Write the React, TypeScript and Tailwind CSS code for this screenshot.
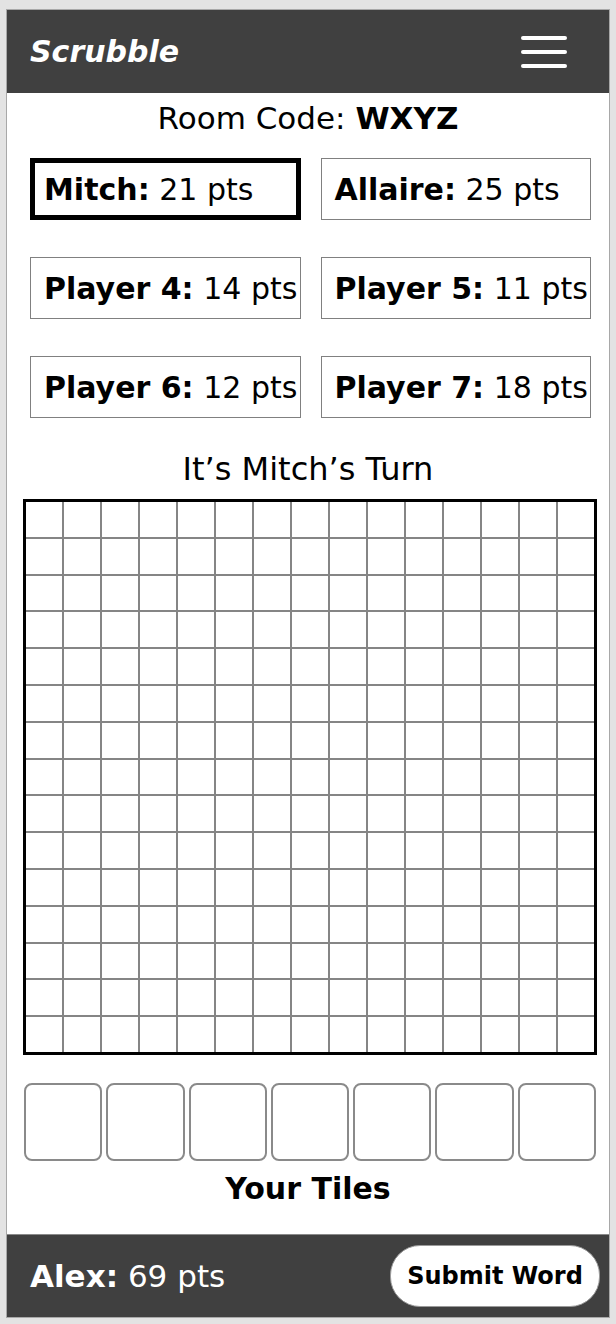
import React from 'react'

const players = [
  { name: 'Mitch', pts: 21, active: true },
  { name: 'Allaire', pts: 25 },
  { name: 'Player 4', pts: 14 },
  { name: 'Player 5', pts: 11 },
  { name: 'Player 6', pts: 12 },
  { name: 'Player 7', pts: 18 },
]

const font = { fontFamily: '"DejaVu Sans", "Noto Sans", sans-serif' }

function App() {
  const cells = Array.from({ length: 15 * 15 })
  const tiles = Array.from({ length: 7 })

  return (
    <div className="min-h-screen bg-[#e3e3e3] px-[6px] pt-[9px] pb-[6px] text-black" style={font}>
      <div className="flex h-[1309px] flex-col border border-[#a8a8a8] bg-white">
        {/* Header */}
        <header className="flex h-[83px] shrink-0 items-center justify-between bg-[#404040] pl-[23px] pr-[42px]">
          <span className="text-[30px] font-bold italic text-white">Scrubble</span>
          <div className="flex w-[46px] flex-col gap-[10px]">
            <span className="h-[4px] rounded-full bg-white" />
            <span className="h-[4px] rounded-full bg-white" />
            <span className="h-[4px] rounded-full bg-white" />
          </div>
        </header>

        {/* Main */}
        <main className="flex flex-1 flex-col">
          <p className="mt-[7px] h-[36px] text-center text-[31px] leading-[36px] whitespace-nowrap">
            Room Code: <b>WXYZ</b>
          </p>

          <div className="mt-[22px] ml-[23px] grid w-[561px] grid-cols-2 gap-x-[20px] gap-y-[37px]">
            {players.map((p) => (
              <div
                key={p.name}
                className={
                  p.active
                    ? 'flex h-[62px] items-center overflow-hidden border-[5px] border-black pl-[9px] text-[30px] whitespace-nowrap'
                    : 'flex h-[62px] items-center overflow-hidden border border-[#808080] pl-[13px] text-[30px] whitespace-nowrap'
                }
              >
                <b>{p.name}:</b>&nbsp;{p.pts} pts
              </div>
            ))}
          </div>

          <p className="mt-[33px] h-[36px] text-center text-[32px] font-medium leading-[36px] whitespace-nowrap">
            It’s Mitch’s Turn
          </p>

          {/* Board */}
          <div className="mt-[12px] ml-[16px] h-[556px] w-[574px] border-[3px] border-black bg-[#858585]">
            <div className="grid h-full w-full grid-cols-[repeat(15,minmax(0,1fr))] grid-rows-[repeat(15,minmax(0,1fr))] gap-[2px]">
              {cells.map((_, i) => (
                <div key={i} className="bg-white" />
              ))}
            </div>
          </div>

          {/* Tiles */}
          <div className="mt-[28px] ml-[17px] flex w-[572px] gap-[4px]">
            {tiles.map((_, i) => (
              <div key={i} className="h-[78px] flex-1 rounded-[8px] border-2 border-[#8a8a8a] bg-white" />
            ))}
          </div>

          <p className="mt-[10px] h-[36px] text-center text-[30px] font-bold leading-[36px]">Your Tiles</p>
        </main>

        {/* Footer */}
        <footer className="flex h-[83px] shrink-0 items-center justify-between border-t border-[#8a8a8a] bg-[#404040] pl-[23px] pr-[9px]">
          <span className="text-[31px] text-white whitespace-nowrap">
            <b>Alex:</b> 69 pts
          </span>
          <button className="h-[62px] w-[210px] rounded-[30px] border border-[#9a9a9a] bg-white text-[24px] font-bold whitespace-nowrap text-black">
            Submit Word
          </button>
        </footer>
      </div>
    </div>
  )
}

export default App
